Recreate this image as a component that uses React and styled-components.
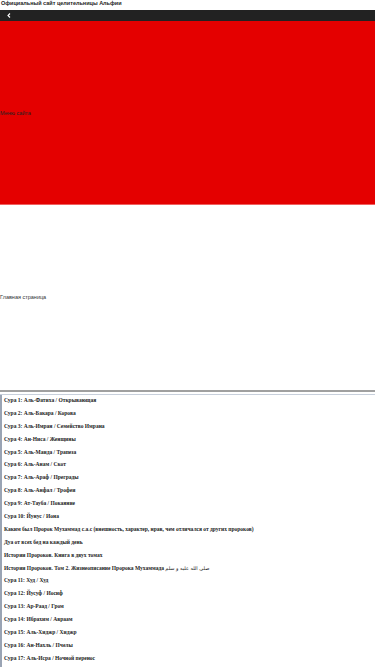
import React from "react";
import styled, { createGlobalStyle } from "styled-components";

const Global = createGlobalStyle`
  html, body { margin: 0; padding: 0; background: #fff; }
  body { font-family: "Liberation Sans", Arial, sans-serif; }
`;

const Page = styled.div`
  display: flex;
  flex-direction: column;
  width: 375px;
`;

const SiteTitle = styled.div`
  height: 10px;
  font-size: 5.5px;
  font-weight: bold;
  line-height: 6px;
  color: #222;
  padding-left: 1px;
`;

const TopBar = styled.div`
  height: 11px;
  background: #222;
  display: flex;
  align-items: center;
  padding-left: 7px;
`;

const Panel = styled.div`
  height: ${(p) => p.$h}px;
  background: ${(p) => p.$bg};
  border-bottom: ${(p) => (p.$line ? `1px solid ${p.$line}` : "none")};
  display: flex;
  align-items: center;
  font-size: 5.5px;
  color: ${(p) => p.$color};
`;

const Rule = styled.div`
  height: 2px;
  background: #a0a0a0;
  margin-top: 1px;
`;

const Rule2 = styled.div`
  height: 1px;
  margin-top: 2px;
  background: #c8d0dc;
`;

const List = styled.ul`
  list-style: none;
  margin: 0;
  padding: 2px 0 0 2px;
  border-left: 2px solid #9aa4b4;
  font-family: "Liberation Serif", "Times New Roman", serif;
  font-weight: bold;
  font-size: 5.5px;
  color: #222;
`;

const Item = styled.li`
  height: 12.9px;
  line-height: 6px;
  white-space: nowrap;
`;

const Arabic = styled.span`
  font-family: "DejaVu Sans", sans-serif;
  font-weight: normal;
  font-size: 5px;
`;

const items = [
  "Сура 1: Аль-Фатиха / Открывающая",
  "Сура 2: Аль-Бакара / Корова",
  "Сура 3: Аль-Имран / Семейство Имрана",
  "Сура 4: Ан-Ниса / Женщины",
  "Сура 5: Аль-Маида / Трапеза",
  "Сура 6: Аль-Анам / Скот",
  "Сура 7: Аль-Араф / Преграды",
  "Сура 8: Аль-Анфал / Трофеи",
  "Сура 9: Ат-Тауба / Покаяние",
  "Сура 10: Йунус / Иона",
  "Каким был Пророк Мухаммад с.а.с (внешность, характер, нрав, чем отличался от других пророков)",
  "Дуа от всех бед на каждый день",
  "Истории Пророков. Книга в двух томах",
  "ARABIC",
  "Сура 11: Худ / Худ",
  "Сура 12: Йусуф / Иосиф",
  "Сура 13: Ар-Раад / Гром",
  "Сура 14: Ибрахим / Авраам",
  "Сура 15: Аль-Хиджр / Хиджр",
  "Сура 16: Ан-Нахль / Пчелы",
  "Сура 17: Аль-Исра / Ночной перенос",
];

export default function App() {
  return (
    <Page>
      <Global />
      <SiteTitle>Официальный сайт целительницы Альфии</SiteTitle>
      <TopBar>
        <svg width="4" height="5" viewBox="0 0 4 5">
          <path d="M3 0.5 L1 2.5 L3 4.5" stroke="#fff" strokeWidth="1.1" fill="none" />
        </svg>
      </TopBar>
      <Panel $h={183} $bg="#e40000" $line="#f06060" $color="#222">Меню сайта</Panel>
      <Panel $h={184} $bg="#fff" $color="#333">Главная страница</Panel>
      <Rule />
      <Rule2 />
      <List>
        {items.map((t, i) => (
          <Item key={i}>
            {t === "ARABIC" ? (
              <>
                Истории Пророков. Том 2. Жизнеописание Пророка Мухаммада{" "}
                <Arabic>صلى الله عليه و سلم</Arabic>
              </>
            ) : (
              t
            )}
          </Item>
        ))}
      </List>
    </Page>
  );
}
